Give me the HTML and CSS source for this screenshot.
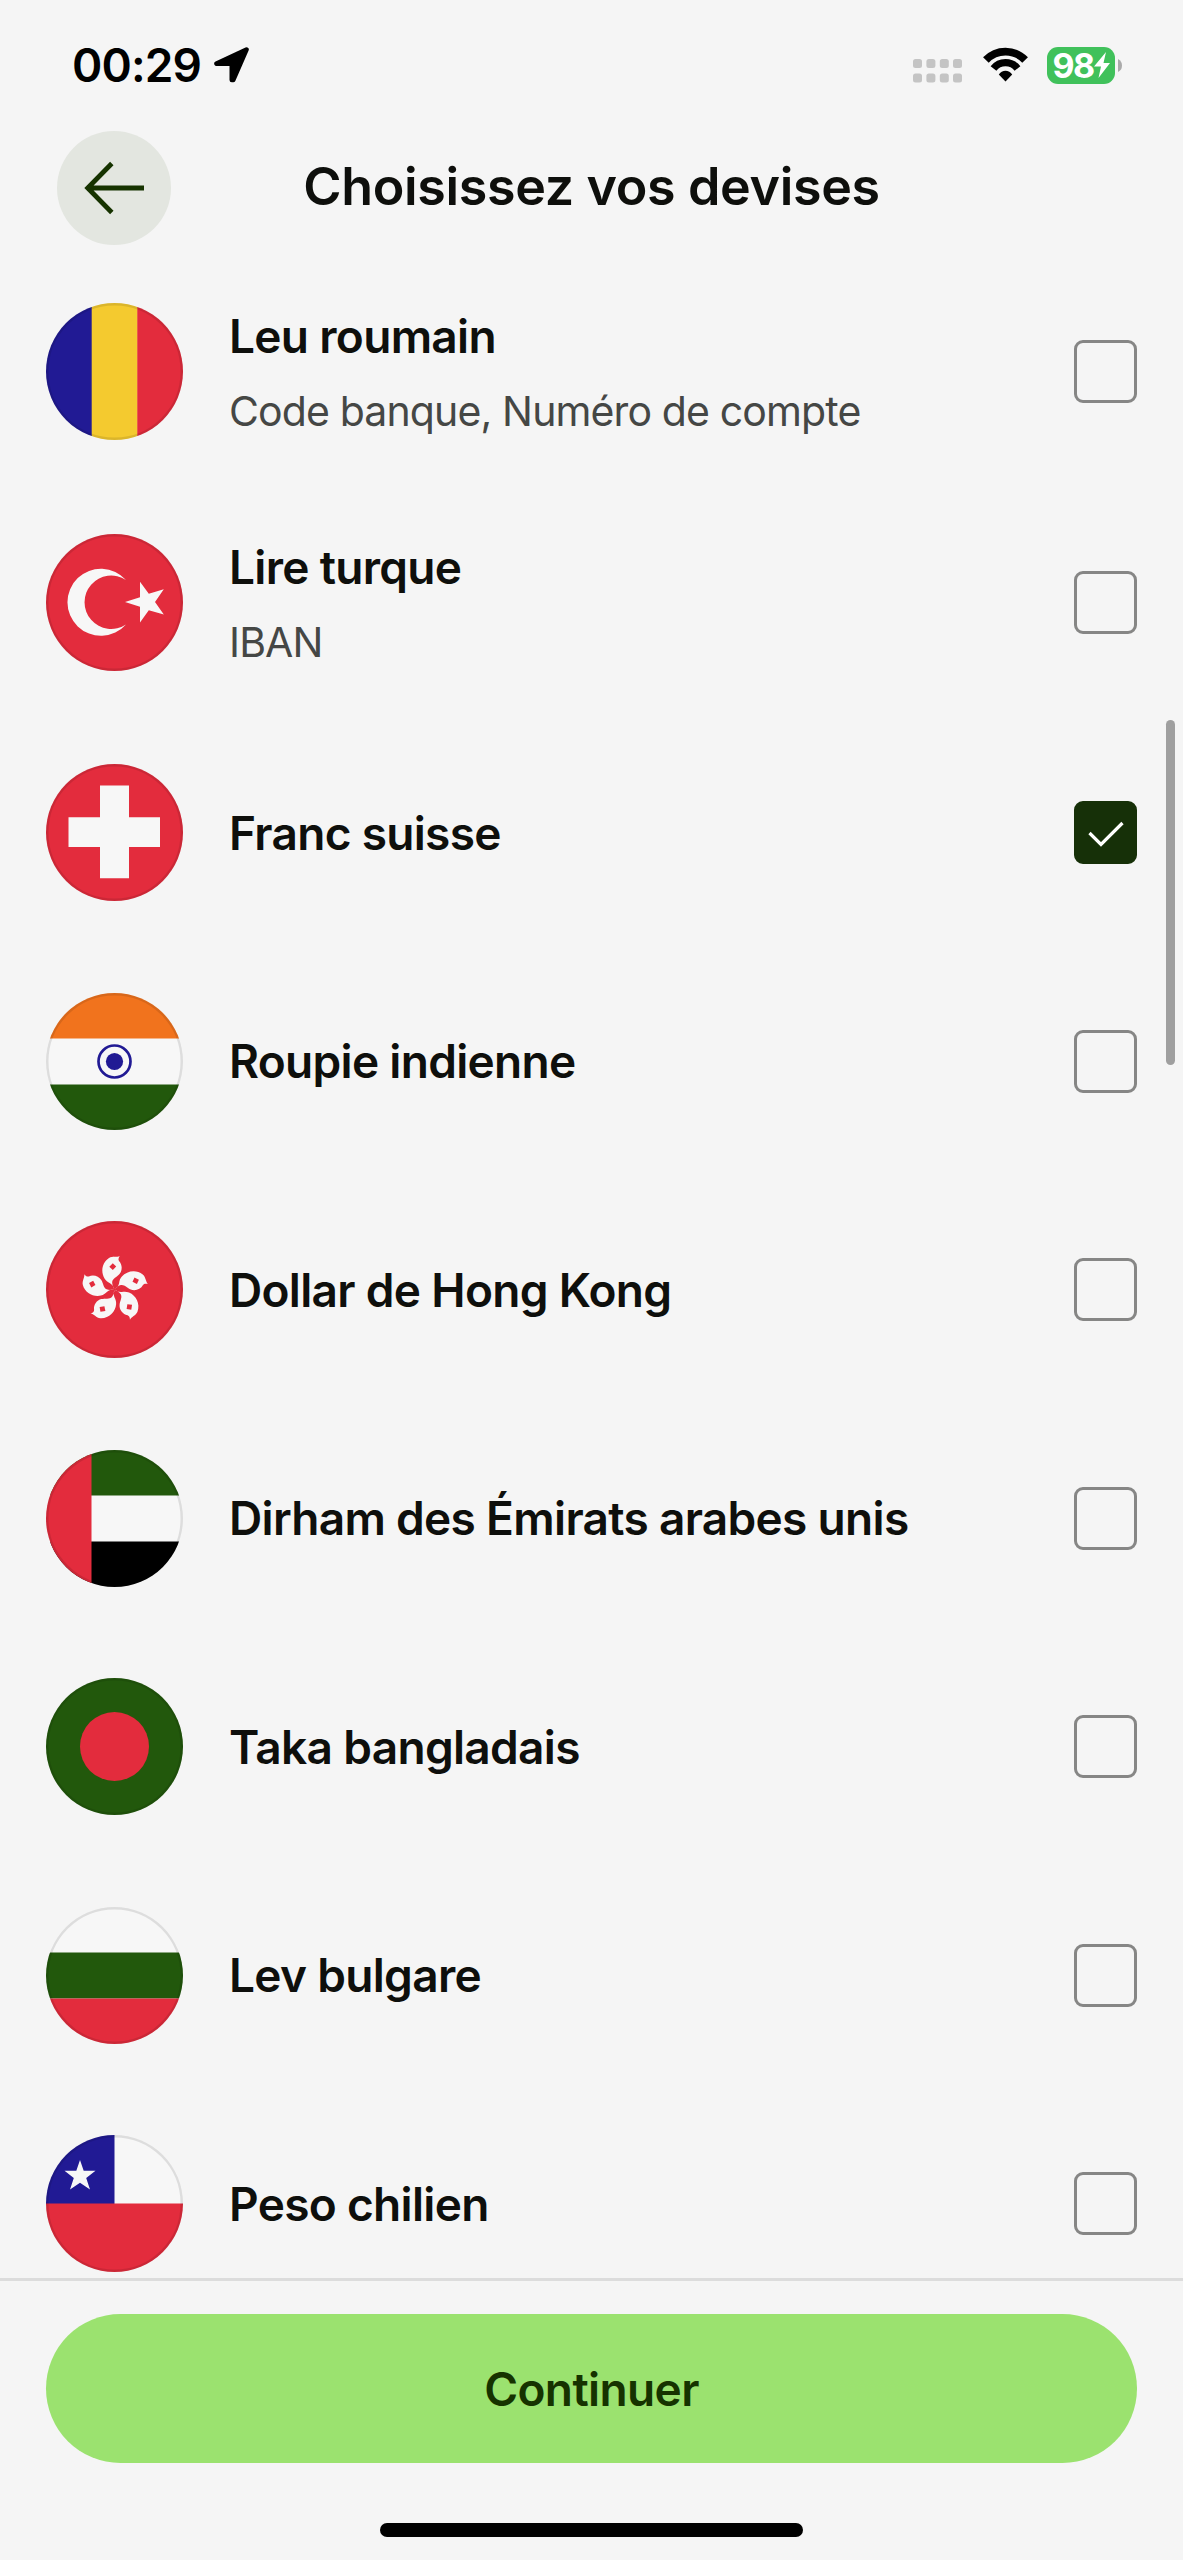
FILE: index.html
```
<!DOCTYPE html>
<html lang="fr">
<head>
<meta charset="utf-8">
<title>Choisissez vos devises</title>
<link rel="stylesheet" href="styles.css">
</head>
<body>
<div class="screen">
  <div class="statusbar">
    <span class="time">00:29</span>
    <svg class="location" width="36" height="36" viewBox="0 0 36 36"><path d="M32.500 2.500L2.500 16.700H17.800V33H19.200Z" fill="#000" stroke="#000" stroke-width="4.600" stroke-linejoin="round"/></svg>
    <div class="indicators">
      <svg class="cell" width="49" height="24" viewBox="0 0 49 24" fill="#c4c4c4"><rect width="9" height="9" rx="2.500"/><rect x="13.400" width="9" height="9" rx="2.500"/><rect x="26.800" width="9" height="9" rx="2.500"/><rect x="40" width="9" height="9" rx="2.500"/><rect y="14.500" width="9" height="9" rx="2.500"/><rect x="13.400" y="14.500" width="9" height="9" rx="2.500"/><rect x="26.800" y="14.500" width="9" height="9" rx="2.500"/><rect x="40" y="14.500" width="9" height="9" rx="2.500"/></svg>
      <svg class="wifi" width="45" height="35" viewBox="0 0 45 35"><path d="M2.900 13A27 27 0 0 1 42.100 13" fill="none" stroke="#000" stroke-width="7.800"/><path d="M10.500 21.500A15.300 15.300 0 0 1 34.500 21.500" fill="none" stroke="#000" stroke-width="7.300"/><path d="M22.500 34.500L15.800 27.500A8 8 0 0 1 29.200 27.500Z"/></svg>
      <div class="battery"><span>98</span><svg width="16" height="26" viewBox="0 0 16 26"><path d="M12 0L0 14.500H7L4.500 26L16 11H9.500Z" fill="#fff"/></svg></div>
      <svg class="cap" width="4" height="13" viewBox="0 0 4 13"><path d="M0 0Q4 2 4 6.500T0 13Z" fill="#aaa"/></svg>
    </div>
  </div>
  <header class="header">
    <button class="back" aria-label="Retour"><svg width="60" height="54" viewBox="0 0 60 54"><path d="M60 27H4M27.800 2.500L3.700 27L27.800 51.500" fill="none" stroke="#163300" stroke-width="4.800"/></svg></button>
    <h1>Choisissez vos devises</h1>
  </header>
  <main class="list">
    <div class="row tall"><svg class="flag" viewBox="0 0 137 137"><rect width="46" height="137" fill="#211a94"/><rect x="45.700" width="46" height="137" fill="#f4ca2f"/><rect x="91.300" width="46" height="137" fill="#e32c3d"/><circle class="rim" cx="68.500" cy="68.500" r="67.500"/></svg><div class="label"><b>Leu roumain</b><small>Code banque, Numéro de compte</small></div><i class="box"></i></div>
    <div class="row medium"><svg class="flag" viewBox="0 0 137 137"><rect width="137" height="137" fill="#e32c3d"/><path d="M80 46A33.500 33.500 0 1 0 80 90.500A26.700 26.700 0 1 1 80 46Z" fill="#f7f7f7"/><path d="M79 68L94 63.200V47.700L102.800 59.800L117.800 55.200L109 68L117.800 80.600L102.800 76.200L94 88.500V72.800Z" fill="#f7f7f7"/><circle class="rim" cx="68.500" cy="68.500" r="67.500"/></svg><div class="label"><b>Lire turque</b><small>IBAN</small></div><i class="box"></i></div>
    <div class="row"><svg class="flag" viewBox="0 0 137 137"><rect width="137" height="137" fill="#e32c3d"/><path d="M54 21.500H83V53.300H114V83H83V114.200H54V83H22.500V53.300H54Z" fill="#f7f7f7"/><circle class="rim" cx="68.500" cy="68.500" r="67.500"/></svg><div class="label"><b>Franc suisse</b></div><i class="box checked"><svg width="36" height="26" viewBox="0 0 36 26"><path d="M1.500 12L13 23.500L34.500 2" fill="none" stroke="#fff" stroke-width="3.200"/></svg></i></div>
    <div class="row"><svg class="flag" viewBox="0 0 137 137"><rect width="137" height="46" fill="#f1731d"/><rect y="45.500" width="137" height="46" fill="#f7f7f7"/><rect y="91.500" width="137" height="46" fill="#22580c"/><circle cx="68.500" cy="68.500" r="16" fill="none" stroke="#211a94" stroke-width="2.700"/><circle cx="68.500" cy="68.500" r="8.600" fill="#211a94"/><circle class="rim" cx="68.500" cy="68.500" r="67.500"/></svg><div class="label"><b>Roupie indienne</b></div><i class="box"></i></div>
    <div class="row"><svg class="flag" viewBox="0 0 137 137"><defs><g id="petal"><path d="M68.500 68.500C67.500 66 67 64 64 62.200C61.500 61 60 59.800 58.500 57.500C54.500 51 56 41.500 63 37C66.500 34.800 71 36.500 73.700 35C72.500 37 72 38.500 73 40C76.500 43.500 76.500 49.500 73.500 53C71 56 66.500 57.500 66.200 61C66 63 67 66 68.500 68.500Z" fill="#f7f7f7"/><path d="M66.800 42.300L70.200 45.500L66.800 49L63.300 45.800Z" fill="#e32c3d"/></g></defs><rect width="137" height="137" fill="#e32c3d"/><use href="#petal"/><use href="#petal" transform="rotate(72 68.500 68.500)"/><use href="#petal" transform="rotate(144 68.500 68.500)"/><use href="#petal" transform="rotate(216 68.500 68.500)"/><use href="#petal" transform="rotate(288 68.500 68.500)"/><circle class="rim" cx="68.500" cy="68.500" r="67.500"/></svg><div class="label"><b>Dollar de Hong Kong</b></div><i class="box"></i></div>
    <div class="row"><svg class="flag" viewBox="0 0 137 137"><rect width="137" height="46" fill="#22580c"/><rect y="45.500" width="137" height="46" fill="#f7f7f7"/><rect y="91.500" width="137" height="46" fill="#000"/><rect width="45.500" height="137" fill="#e32c3d"/><circle class="rim" cx="68.500" cy="68.500" r="67.500"/></svg><div class="label"><b>Dirham des Émirats arabes unis</b></div><i class="box"></i></div>
    <div class="row"><svg class="flag" viewBox="0 0 137 137"><rect width="137" height="137" fill="#22580c"/><circle cx="68.500" cy="68.500" r="34.500" fill="#e32c3d"/><circle class="rim" cx="68.500" cy="68.500" r="67.500"/></svg><div class="label"><b>Taka bangladais</b></div><i class="box"></i></div>
    <div class="row"><svg class="flag" viewBox="0 0 137 137"><rect width="137" height="46" fill="#f7f7f7"/><rect y="45.500" width="137" height="46" fill="#22580c"/><rect y="91.500" width="137" height="46" fill="#e32c3d"/><circle class="rim" cx="68.500" cy="68.500" r="67.500"/></svg><div class="label"><b>Lev bulgare</b></div><i class="box"></i></div>
    <div class="row"><svg class="flag" viewBox="0 0 137 137"><rect width="137" height="69" fill="#f7f7f7"/><rect width="68.500" height="69" fill="#211a94"/><rect y="68.500" width="137" height="69" fill="#e32c3d"/><path d="M34 25L37.700 35.800H49.500L40.200 43L44 54.500L34 47.800L24 54.500L27.800 43L18.500 35.800H30.300Z" fill="#f7f7f7"/><circle class="rim" cx="68.500" cy="68.500" r="67.500"/></svg><div class="label"><b>Peso chilien</b></div><i class="box"></i></div>
    <div class="scrollbar"></div>
  </main>
  <footer class="footer">
    <button class="continue">Continuer</button>
    <div class="home"></div>
  </footer>
</div>
</body>
</html>
```
FILE: styles.css
```
* { box-sizing: border-box; }
body { margin: 0; background: #f5f5f5; font-family: Inter, sans-serif; color: #0e0f0c; }
svg { display: block; flex: none; }
button { border: 0; padding: 0; font: inherit; }
.screen { width: 1183px; height: 2560px; display: flex; flex-direction: column; overflow: hidden; }
.statusbar { height: 130px; display: flex; align-items: center; padding: 0 61px 0 72px; color: #000; }
.time { font-size: 46px; font-weight: 600; width: 129px; letter-spacing: -0.9px; white-space: nowrap; }
.location { margin-left: 13px; }
.indicators { margin-left: auto; display: flex; align-items: center; }
.cell { margin-top: 11px; }
.wifi { margin: -1px 19px 0 21px; }
.battery { width: 68px; height: 37px; border-radius: 11px; background: #40c15b; color: #fff; display: flex; align-items: center; justify-content: center; font-size: 34px; line-height: 37px; font-weight: 700; }
.battery span { letter-spacing: -1.5px; }
.cap { margin-left: 3px; }
.header { height: 173px; display: grid; grid-template-columns: 171px 1fr 171px; align-items: start; }
.back { width: 114px; height: 114px; margin: 1px 0 0 57px; border-radius: 50%; background: #e3e6e0; display: flex; align-items: center; justify-content: center; }
h1 { margin: 26px 0 0; text-align: center; font-size: 52px; line-height: 62px; font-weight: 600; letter-spacing: -0.35px; white-space: nowrap; }
.list { flex: none; height: 1975px; position: relative; padding: 0 46px; overflow: hidden; }
.row { display: flex; align-items: center; height: 137px; margin-bottom: 91.5px; }
.tall { margin-bottom: 94px; }
.medium { margin-bottom: 93px; }
.flag { width: 137px; height: 137px; border-radius: 50%; }
.rim { fill: none; stroke: #000; stroke-opacity: .1; stroke-width: 3; }
.label { margin-left: 46px; flex: 1; display: flex; flex-direction: column; white-space: nowrap; }
.label b { font-size: 46px; line-height: 56px; font-weight: 600; letter-spacing: -0.68px; }
.label small { font-size: 41px; line-height: 50px; margin-top: 22px; color: #454745; letter-spacing: -0.87px; }
.box { width: 63px; height: 63px; border: 3px solid #868685; border-radius: 9px; display: flex; align-items: center; justify-content: center; }
.checked { background: #163008; border-color: #163008; }
.checked svg { margin-top: 3px; }
.scrollbar { position: absolute; right: 8px; top: 417px; width: 9px; height: 345px; border-radius: 5px; background: #9f9f9f; }
.footer { flex: 1; border-top: 3px solid #dcdcdc; padding: 33px 46px 0; display: flex; flex-direction: column; align-items: center; }
.continue { width: 100%; height: 149px; border-radius: 75px; background: #9be26f; color: #163300; font-size: 46px; font-weight: 600; letter-spacing: -0.6px; }
.home { width: 423px; height: 14px; border-radius: 7px; background: #000; margin-top: 60px; }
```
